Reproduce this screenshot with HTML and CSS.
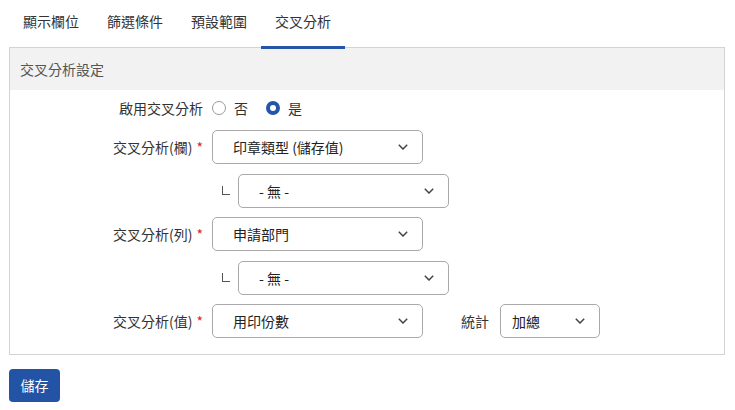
FILE: index.html
```html
<!DOCTYPE html>
<html lang="zh-Hant">
<head>
<meta charset="utf-8">
<title>交叉分析</title>
<link rel="stylesheet" href="styles.css">
</head>
<body>
<div class="page">
  <nav class="tabs">
    <div class="tab">顯示欄位</div>
    <div class="tab">篩選條件</div>
    <div class="tab">預設範圍</div>
    <div class="tab active">交叉分析</div>
  </nav>
  <section class="panel">
    <div class="panel-head">交叉分析設定</div>
    <div class="form">
      <div class="row radio-row">
        <div class="label">啟用交叉分析</div>
        <span class="radio"></span><span class="radio-text">否</span>
        <span class="radio on"></span><span class="radio-text">是</span>
      </div>
      <div class="row">
        <div class="label">交叉分析(欄)<span class="req">*</span></div>
        <div class="select"><span>印章類型 (儲存值)</span><svg class="chev" width="10" height="6" viewBox="0 0 10 6"><path d="M0.8 0.8 L5 5 L9.2 0.8" fill="none" stroke="#444" stroke-width="1.5"/></svg></div>
      </div>
      <div class="row">
        <div class="label"></div>
        <span class="sub-mark"></span>
        <div class="select"><span>- 無 -</span><svg class="chev" width="10" height="6" viewBox="0 0 10 6"><path d="M0.8 0.8 L5 5 L9.2 0.8" fill="none" stroke="#444" stroke-width="1.5"/></svg></div>
      </div>
      <div class="row">
        <div class="label">交叉分析(列)<span class="req">*</span></div>
        <div class="select"><span>申請部門</span><svg class="chev" width="10" height="6" viewBox="0 0 10 6"><path d="M0.8 0.8 L5 5 L9.2 0.8" fill="none" stroke="#444" stroke-width="1.5"/></svg></div>
      </div>
      <div class="row">
        <div class="label"></div>
        <span class="sub-mark"></span>
        <div class="select"><span>- 無 -</span><svg class="chev" width="10" height="6" viewBox="0 0 10 6"><path d="M0.8 0.8 L5 5 L9.2 0.8" fill="none" stroke="#444" stroke-width="1.5"/></svg></div>
      </div>
      <div class="row">
        <div class="label">交叉分析(值)<span class="req">*</span></div>
        <div class="select"><span>用印份數</span><svg class="chev" width="10" height="6" viewBox="0 0 10 6"><path d="M0.8 0.8 L5 5 L9.2 0.8" fill="none" stroke="#444" stroke-width="1.5"/></svg></div>
        <span class="stat-label">統計</span>
        <div class="select small"><span>加總</span><svg class="chev" width="10" height="6" viewBox="0 0 10 6"><path d="M0.8 0.8 L5 5 L9.2 0.8" fill="none" stroke="#444" stroke-width="1.5"/></svg></div>
      </div>
    </div>
  </section>
  <button class="btn">儲存</button>
</div>
</body>
</html>
```
FILE: styles.css
```css
html, body {
  margin: 0;
  background: #fff;
}
body {
  font-family: "Noto Sans CJK TC", "Noto Sans", sans-serif;
  font-size: 14px;
  line-height: 20px;
  color: #333;
}
.page {
  padding: 0 10px 0 9px;
}
.tabs {
  display: flex;
  align-items: flex-start;
  height: 47px;
}
.tab {
  position: relative;
  z-index: 1;
  box-sizing: border-box;
  height: 49px;
  padding: 11px 14px 0;
  border-bottom: 3px solid transparent;
  color: #333;
}
.tab.active {
  border-bottom-color: #2355a8;
}
.panel {
  border: 1px solid #d3d3d3;
}
.panel-head {
  height: 42px;
  line-height: 42px;
  padding-left: 10px;
  background: #f2f2f2;
  color: #555;
}
.form {
  display: flex;
  flex-direction: column;
  gap: 9.5px;
  padding: 7px 0 16px;
}
.row {
  display: flex;
  align-items: center;
}
.radio-row {
  height: 22px;
  margin-bottom: 1.5px;
}
.label {
  width: 193px;
  margin-right: 9px;
  text-align: right;
  color: #333;
  white-space: nowrap;
}
.req {
  color: #e02424;
  margin-left: 4px;
}
.radio {
  box-sizing: border-box;
  width: 14px;
  height: 14px;
  border-radius: 50%;
  border: 1px solid #9a9a9a;
  background: #fff;
}
.radio.on {
  border: 4px solid #2355a8;
}
.radio-text {
  margin-left: 8px;
  margin-right: 18px;
  color: #333;
}
.select {
  box-sizing: border-box;
  width: 211px;
  height: 34px;
  border: 1px solid #a9a9a9;
  border-radius: 5px;
  display: flex;
  align-items: center;
  justify-content: space-between;
  padding: 0 14px 0 20px;
  color: #222;
  background: #fff;
}
.select.small {
  width: 100px;
  padding-left: 11px;
}
.chev {
  display: block;
  flex: none;
}
.sub-mark {
  box-sizing: border-box;
  width: 8px;
  height: 9px;
  margin-left: 10px;
  margin-right: 8px;
  border-left: 1.5px solid #555;
  border-bottom: 1.5px solid #555;
}
.stat-label {
  margin-left: 38px;
  margin-right: 11px;
  color: #333;
}
.btn {
  display: block;
  margin-top: 14px;
  width: 51px;
  height: 33px;
  padding: 0;
  border: none;
  border-radius: 4px;
  background: #2353a5;
  color: #fff;
  font: inherit;
  line-height: 33px;
}
```
